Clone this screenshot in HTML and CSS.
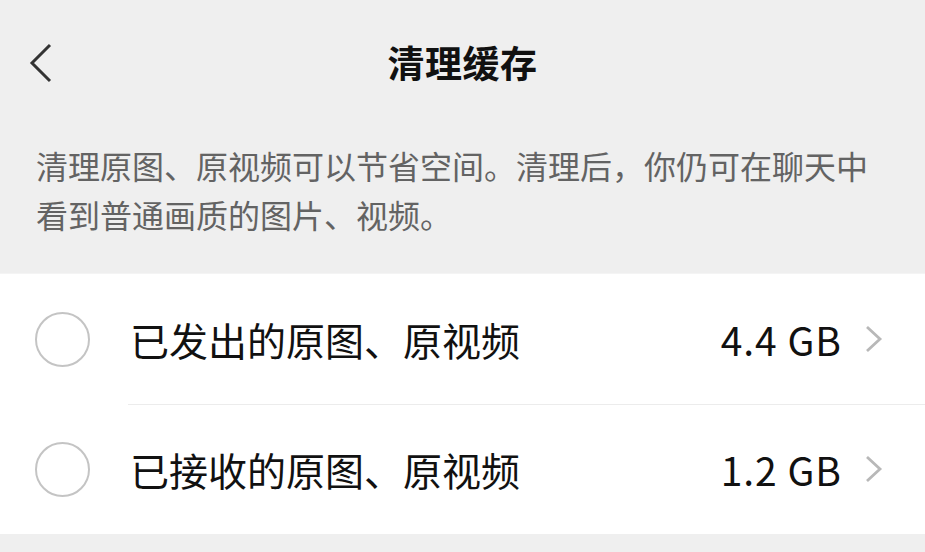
FILE: index.html
```html
<!DOCTYPE html>
<html lang="zh-CN">
<head>
    <meta charset="UTF-8">
    <meta name="viewport" content="width=device-width, initial-scale=1.0">
    <title>清理缓存</title>
    <link rel="stylesheet" href="styles.css">
</head>
<body>
    <div class="page">
        <header class="topbar">
            <button class="back" aria-label="返回">
                <svg width="26" height="40" viewBox="0 0 26 40"><path d="M22 2 L4 20 L22 38" fill="none" stroke="#333" stroke-width="3" stroke-linejoin="miter"/></svg>
            </button>
            <h1 class="title">清理缓存</h1>
        </header>

        <p class="desc">清理原图、原视频可以节省空间。清理后，你仍可在聊天中看到普通画质的图片、视频。</p>

        <ul class="list">
            <li class="item">
                <span class="radio"></span>
                <span class="label">已发出的原图、原视频</span>
                <span class="size">4.4 GB</span>
                <svg class="arrow" width="20" height="28" viewBox="0 0 20 28"><path d="M3 2 L16 14 L3 26" fill="none" stroke="#b8b8b8" stroke-width="2.8"/></svg>
            </li>
            <li class="item">
                <span class="radio"></span>
                <span class="label">已接收的原图、原视频</span>
                <span class="size">1.2 GB</span>
                <svg class="arrow" width="20" height="28" viewBox="0 0 20 28"><path d="M3 2 L16 14 L3 26" fill="none" stroke="#b8b8b8" stroke-width="2.8"/></svg>
            </li>
        </ul>
    </div>
</body>
</html>
```

FILE: styles.css
```css
* { box-sizing: border-box; margin: 0; padding: 0; }
body { background: #efefef; font-family: "Noto Sans CJK SC", "Noto Sans", sans-serif; color: #111; }
.page { width: 925px; height: 552px; overflow: hidden; }

.topbar { position: relative; height: 124px; display: flex; align-items: center; justify-content: center; }
.back { position: absolute; left: 28px; top: 43px; background: none; border: none; display: flex; }
.title { font-size: 37px; font-weight: 700; color: #111; letter-spacing: 0.5px; }

.desc { padding: 17px 40px 34px 36px; font-size: 32px; line-height: 49px; color: #636363; }

.list { list-style: none; background: #fff; border-top: 1px solid #f4f4f4; }
.item { position: relative; height: 130px; display: flex; align-items: center; padding: 0 41px 0 35px; }
.item + .item::before { content: ""; position: absolute; top: 0; left: 128px; right: 0; border-top: 1px solid #ececec; }
.radio { width: 55px; height: 55px; border: 2.5px solid #c4c4c4; border-radius: 50%; flex-shrink: 0; }
.label { margin-left: 40px; font-size: 39px; color: #111; flex: 1; }
.size { font-size: 39px; color: #111; letter-spacing: 1px; margin-right: 22px; }
.arrow { flex-shrink: 0; }
```
